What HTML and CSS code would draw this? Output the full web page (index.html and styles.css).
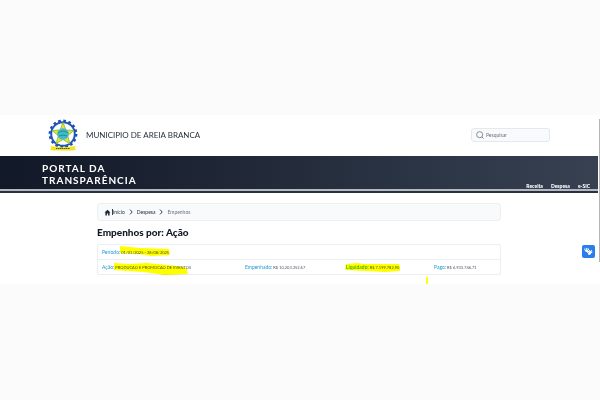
FILE: index.html
```html
<!DOCTYPE html>
<html lang="pt-BR">
<head>
  <meta charset="UTF-8">
  <meta name="viewport" content="width=device-width, initial-scale=1.0">
  <title>Portal da Transparência</title>
  <link rel="stylesheet" href="styles.css">
</head>
<body>
  <div class="portal">
    <header class="topo">
      <svg class="brasao" viewBox="0 0 32 32" aria-hidden="true">
        <circle cx="16" cy="15" r="13" fill="#fff" stroke="#1d4fb4" stroke-width="2.8" stroke-dasharray="2.6 2.5"/>
        <circle cx="16" cy="15" r="11.8" fill="#fff" stroke="#2355b8" stroke-width="2"/>
        <path d="M16 3.500l2.900 7.500 8 .5-6.200 5.200 2.200 8L16 20.500l-6.900 4.200 2.200-8-6.200-5.200 8-.5z" fill="#e5e532" stroke="#7fb53c" stroke-width=".8"/>
        <circle cx="16" cy="15" r="5.8" fill="#41b9cf"/>
        <path d="M11 14q5-4 10 0M12 17q4-2 8 0" fill="none" stroke="#258a88" stroke-width="1"/>
        <path d="M3 27l4 .6q9 1.600 18 0l4-.6-1.500 1.800L29 31l-5 .5H8L3 31l1.500-2.200z" fill="#f2e51e"/>
        <path d="M9 29.500h14" stroke="#4c5a2a" stroke-width="1" stroke-dasharray="1.5 .5"/>
      </svg>
      <span class="municipio">MUNICIPIO DE AREIA BRANCA</span>
      <label class="busca">
        <svg viewBox="0 0 10 10" aria-hidden="true"><circle cx="4.6" cy="4.6" r="3.8"/><path d="M7.300 7.300L9.500 9.500"/></svg>
        <input type="text" placeholder="Pesquisar" aria-label="Pesquisar">
      </label>
    </header>

    <div class="faixa">
      <div class="titulo">PORTAL DA<br>TRANSPARÊNCIA</div>
      <nav class="menu">
        <a href="#">Receita</a>
        <a href="#">Despesa</a>
        <a href="#">e-SIC</a>
      </nav>
    </div>

    <main class="conteudo">
      <nav class="trilha">
        <a href="#" class="inicio">
          <svg class="casa" viewBox="0 0 8 8" aria-hidden="true"><path d="M4 .8L.6 4h1v3.400h1.700V5h1.400v2.400h1.700V4h1z"/></svg>
          <span class="cursor"></span>Início
        </a>
        <svg class="seta" viewBox="0 0 4 6" aria-hidden="true"><path d="M1 .6L3.200 3 1 5.400"/></svg>
        <a href="#">Despesa</a>
        <svg class="seta" viewBox="0 0 4 6" aria-hidden="true"><path d="M1 .6L3.200 3 1 5.400"/></svg>
        <span class="atual">Empenhos</span>
      </nav>

      <h1>Empenhos por: Ação</h1>

      <section class="resumo">
        <div class="linha">
          <div class="campo"><span class="rotulo">Período:</span>
            <span class="marcado">01/01/2025 - 28/08/2025
              <svg class="marca marca-periodo" viewBox="0 0 50 10" preserveAspectRatio="none"><path d="M0 0l20 2 29 1 1 6-18 1-14-2-18-1z"/></svg>
            </span>
          </div>
        </div>
        <div class="linha">
          <div class="campo"><span class="rotulo">Ação:</span>
            <span class="marcado">PRODUCAO E PROMOCAO DE EVENTOS
              <svg class="marca marca-acao" viewBox="0 0 70 12" preserveAspectRatio="none"><path d="M0 0l14 1 17-1 29 3 9 2 1 6-22 1-20-3L0 7z"/></svg>
            </span>
          </div>
          <div class="campo"><span class="rotulo">Empenhado:</span> <span>R$ 10.203.352,67</span></div>
          <div class="campo">
            <span class="marcado"><span class="rotulo">Liquidado:</span> R$ 7.199.782,90
              <svg class="marca marca-valor" viewBox="0 0 53 9" preserveAspectRatio="none"><path d="M1 1l11-1 6 1h34l1 7-15 1-18-1-19-1H0z"/></svg>
            </span>
          </div>
          <div class="campo"><span class="rotulo">Pago:</span> <span>R$ 6.933.746,71</span></div>
        </div>
      </section>
    </main>

    <span class="pingo"></span>
    <span class="rolagem"></span>
    <button class="libras" aria-label="Acessível em Libras">
      <svg viewBox="0 0 13 13" aria-hidden="true">
        <path d="M3.500 6L2.700 4M5 5L4.200 3.200M6.500 4.800L6 3.500M3.800 6l2 1.400" stroke-width="1"/>
        <path d="M4.500 5.500l1.500 1" stroke-width="2"/>
        <path d="M7.500 8.500l.8-1.200" stroke-width="2.600"/>
        <path d="M8 6.500L7.500 5.500M9 6.500l.5-1.200M9.200 7.600l.9-.5M7 9.500l-.6-1" stroke-width="1"/>
      </svg>
    </button>
  </div>
</body>
</html>
```
FILE: styles.css
```css
* {
  box-sizing: border-box;
}

body {
  margin: 0;
  padding: 115px 0;
  background-color: #fbfbfb;
  font-family: Lato, "Open Sans", sans-serif;
  font-size: 5px;
  color: #1f2937;
}

a {
  color: inherit;
  text-decoration: none;
}

.portal {
  position: relative;
  background-color: #fff;
  padding: 0 2px 9px 0;
}

/* topo */
.topo {
  display: flex;
  align-items: center;
  height: 41px;
  padding: 0 48px 2px 47px;
}

.brasao {
  width: 32px;
  height: 32px;
  margin-right: 7px;
}

.municipio {
  font-size: 8px;
}

.busca {
  display: flex;
  align-items: center;
  gap: 2px;
  width: 79px;
  height: 14px;
  margin-left: auto;
  padding: 0 4px;
  background-color: #f9fafb;
  border: 1px solid #e5e8ec;
  border-radius: 3px;
}

.busca svg {
  flex: none;
  width: 8px;
  height: 8px;
  fill: none;
  stroke: #6b7280;
}

.busca input {
  width: 100%;
  padding: 0;
  border: 0;
  background: none;
  font: inherit;
  outline: none;
}

.busca input::placeholder {
  color: #6b7280;
}

/* faixa escura */
.faixa {
  display: flex;
  justify-content: space-between;
  align-items: flex-end;
  height: 37px;
  padding: 0 8px 4px 42px;
  background: linear-gradient(#273142, #273142) 0 100% / 100% 2px no-repeat,
    linear-gradient(#b3b8c1, #b3b8c1) 0 33px / 100% 2px no-repeat,
    linear-gradient(90deg, #111827, #374151);
  color: #fff;
}

.titulo {
  align-self: flex-start;
  padding-top: 6px;
  font-size: 10px;
  line-height: 12px;
  font-weight: bold;
  letter-spacing: 1px;
}

.menu {
  display: flex;
  gap: 8px;
  line-height: 6px;
  font-weight: 900;
}

/* conteudo */
.conteudo {
  margin: 0 97px;
  padding-top: 10px;
}

.trilha {
  display: flex;
  align-items: center;
  gap: 4px;
  height: 18px;
  padding: 0 6px;
  background-color: #f9fafb;
  border: 1px solid #eceef1;
  border-radius: 3px;
}

.inicio {
  display: flex;
  align-items: center;
}

.casa {
  width: 7px;
  height: 7px;
  margin-right: 1px;
  fill: #1f2937;
}

.cursor {
  width: 1px;
  height: 6px;
  background-color: #374151;
}

.seta {
  width: 4px;
  height: 6px;
  fill: none;
  stroke: #374151;
}

.atual {
  color: #6b7280;
}

h1 {
  margin: 5px 0 6px;
  font-size: 10px;
  line-height: 12px;
  font-weight: 900;
  color: #111827;
}

.resumo {
  border: 1px solid #eceef1;
  border-radius: 2px;
}

.linha {
  display: grid;
  grid-template-columns: 143fr 101fr 88fr 62fr;
  align-items: center;
  height: 14px;
  padding: 0 4px;
  white-space: nowrap;
}

.linha + .linha {
  height: 15px;
  border-top: 1px solid #eceef1;
}

.campo {
  font-size: 4px;
  line-height: 6px;
  color: #4b5563;
}

.rotulo {
  font-size: 5px;
  color: #1c9bd1;
}

/* marca-texto */
.marcado {
  position: relative;
}

.marca {
  position: absolute;
  left: -1px;
  width: calc(100% + 2px);
  fill: #ff0;
  mix-blend-mode: multiply;
}

.marca-periodo {
  top: -4px;
  height: 10px;
}

.marca-acao {
  top: -2px;
  width: calc(100% - 2px);
  height: 12px;
}

.marca-valor {
  top: -2px;
  width: calc(100% + 2px);
  height: 9px;
}

.pingo {
  position: absolute;
  left: 71%;
  bottom: 0;
  width: 2px;
  height: 7px;
  background-color: #ff0;
}

.rolagem {
  position: absolute;
  right: 0;
  top: 4px;
  width: 1px;
  height: 143px;
  background-color: #b5b5b5;
}

.libras {
  position: absolute;
  right: 5px;
  top: 130px;
  width: 13px;
  height: 13px;
  padding: 0;
  border: 0;
  border-radius: 2px;
  background-color: #2b7de9;
}

.libras svg {
  display: block;
  width: 13px;
  height: 13px;
  fill: none;
  stroke: #fff;
  stroke-linecap: round;
}
```
